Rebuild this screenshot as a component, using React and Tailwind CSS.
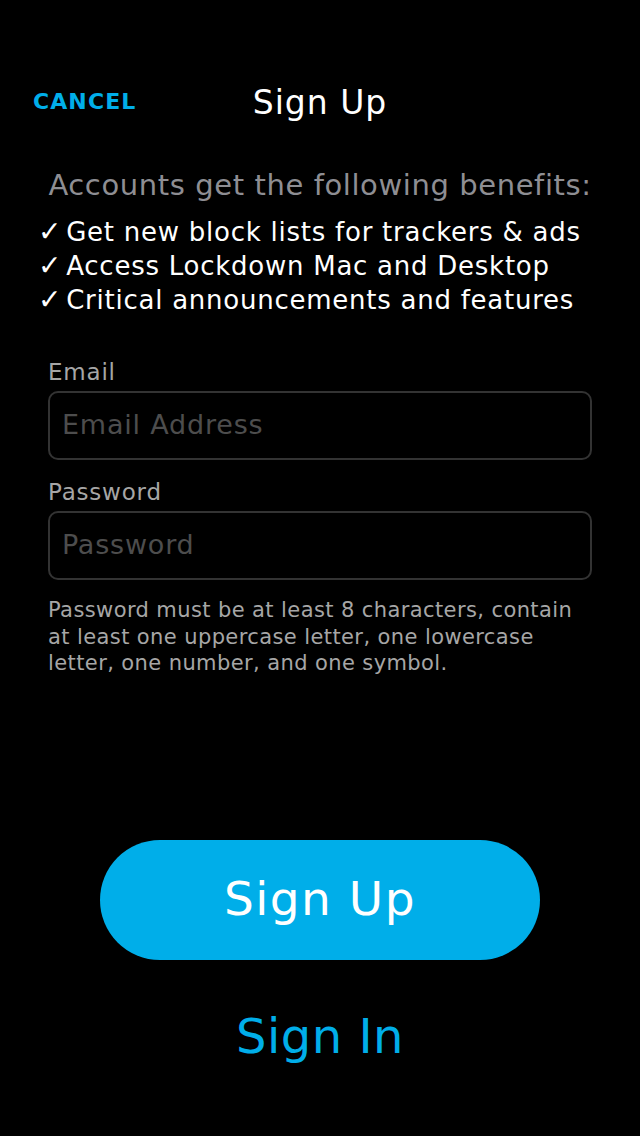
export default function App() {
  const font = { fontFamily: '"DejaVu Sans", "Noto Sans", sans-serif' };
  return (
    <div className="w-[640px] h-[1136px] bg-black flex flex-col" style={font}>
      <div className="relative h-[200px] shrink-0">
        <div className="absolute left-[33px] top-[85px] text-[22px] font-bold text-[#00aee9] tracking-[1.1px]">CANCEL</div>
        <div className="absolute left-0 right-0 top-[78px] text-center text-[33px] text-white tracking-[1px]">Sign Up</div>
      </div>
      <div className="px-[30px] flex flex-col">
        <div className="text-center text-[29px] text-[#8e8e93] leading-[34px] -mt-[32px] tracking-[0.6px]">Accounts get the following benefits:</div>
        <div className="mt-[13px] pl-[8px] text-white text-[26px] leading-[34px] tracking-[0.75px]">
          <div><span className="text-[28px] mr-[4px]">✓</span>Get new block lists for trackers &amp; ads</div>
          <div><span className="text-[28px] mr-[4px]">✓</span>Access Lockdown Mac and Desktop</div>
          <div><span className="text-[28px] mr-[4px]">✓</span>Critical announcements and features</div>
        </div>
      </div>
      <div className="px-[48px] mt-[41px] flex flex-col">
        <div className="text-[23px] text-[#a6a6a6] leading-[28px] tracking-[0.8px]">Email</div>
        <div className="mt-[5px] h-[69px] border-2 border-[#333] rounded-[10px] flex items-center px-[12px] text-[27px] text-[#4d4d4d] tracking-[0.8px]">Email Address</div>
        <div className="mt-[18px] text-[23px] text-[#a6a6a6] leading-[28px] tracking-[0.8px]">Password</div>
        <div className="mt-[5px] h-[69px] border-2 border-[#333] rounded-[10px] flex items-center px-[12px] text-[27px] text-[#4d4d4d] tracking-[0.8px]">Password</div>
        <div className="mt-[17px] text-[21px] text-[#a6a6a6] leading-[26.5px] tracking-[0.4px]">Password must be at least 8 characters, contain at least one uppercase letter, one lowercase letter, one number, and one symbol.</div>
      </div>
      <div className="flex-1" />
      <div className="flex flex-col items-center pb-[70px]">
        <div className="w-[440px] h-[120px] rounded-full bg-[#00aee9] flex items-center justify-center text-white text-[47px] tracking-[1.5px] pb-[2px]">Sign Up</div>
        <div className="mt-[46px] text-[#00aee9] text-[48px] leading-[60px] tracking-[0.5px]">Sign In</div>
      </div>
    </div>
  );
}
